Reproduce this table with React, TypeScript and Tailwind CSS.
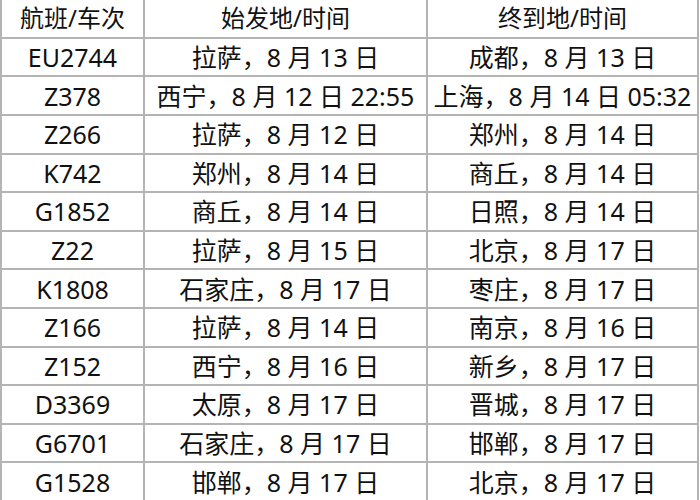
const rows: [string, string, string][] = [
  ["EU2744", "拉萨，8 月 13 日", "成都，8 月 13 日"],
  ["Z378", "西宁，8 月 12 日 22:55", "上海，8 月 14 日 05:32"],
  ["Z266", "拉萨，8 月 12 日", "郑州，8 月 14 日"],
  ["K742", "郑州，8 月 14 日", "商丘，8 月 14 日"],
  ["G1852", "商丘，8 月 14 日", "日照，8 月 14 日"],
  ["Z22", "拉萨，8 月 15 日", "北京，8 月 17 日"],
  ["K1808", "石家庄，8 月 17 日", "枣庄，8 月 17 日"],
  ["Z166", "拉萨，8 月 14 日", "南京，8 月 16 日"],
  ["Z152", "西宁，8 月 16 日", "新乡，8 月 17 日"],
  ["D3369", "太原，8 月 17 日", "晋城，8 月 17 日"],
  ["G6701", "石家庄，8 月 17 日", "邯郸，8 月 17 日"],
  ["G1528", "邯郸，8 月 17 日", "北京，8 月 17 日"],
];

const cell = "border-2 border-[#b4b4b4] text-center p-0 font-normal leading-[28px]";

export default function App() {
  return (
    <div className="h-[500px] w-[700px] overflow-hidden bg-white font-['Noto_Sans','Noto_Sans_CJK_SC',sans-serif] text-[25px] text-[#111]">
      <table className="-mt-[2px] w-[699px] table-fixed border-collapse">
        <colgroup>
          <col className="w-[143px]" />
          <col className="w-[283px]" />
          <col />
        </colgroup>
        <thead>
          <tr className="h-[38.8px]">
            <th className={`${cell} text-[24px]`}>航班/车次</th>
            <th className={`${cell} text-[24px]`}>始发地/时间</th>
            <th className={`${cell} text-[24px]`}>终到地/时间</th>
          </tr>
        </thead>
        <tbody>
          {rows.map((r) => (
            <tr key={r[0]} className="h-[38.6px]">
              <td className={cell}>{r[0]}</td>
              <td className={cell}>{r[1]}</td>
              <td className={cell}>{r[2]}</td>
            </tr>
          ))}
        </tbody>
      </table>
    </div>
  );
}
